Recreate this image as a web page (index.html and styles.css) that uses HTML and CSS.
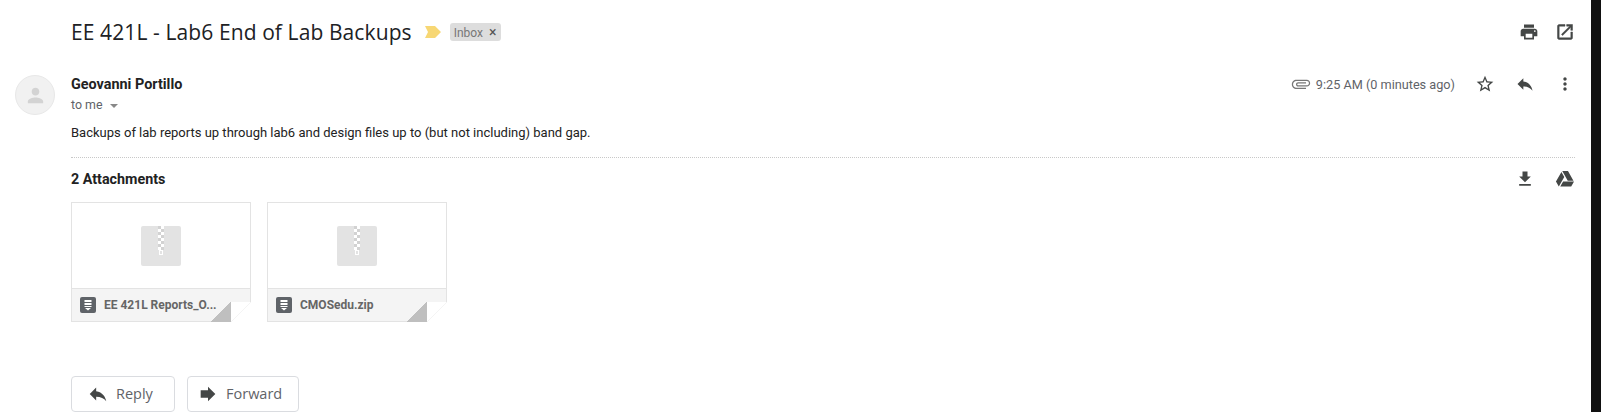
FILE: index.html
```html
<!DOCTYPE html>
<html>
<head>
  <title>EE 421L - Lab6 End of Lab Backups</title>
  <link rel="stylesheet" href="styles.css">
</head>
<body>
  <div class="page">
    <div class="mail">
      <div class="subject-row">
        <h2 class="subject">EE 421L - Lab6 End of Lab Backups</h2>
        <svg class="marker" viewBox="0 0 16 12"><path d="M0 0h10l6 6-6 6H0l3-6z"/></svg>
        <span class="label">Inbox <span class="label-x">×</span></span>
        <div class="icons icons-top">
          <svg class="icon" viewBox="0 0 24 24"><path d="M19 8H5c-1.66 0-3 1.34-3 3v6h4v4h12v-4h4v-6c0-1.66-1.34-3-3-3zm-3 11H8v-5h8v5zm3-7c-.55 0-1-.45-1-1s.45-1 1-1 1 .45 1 1-.45 1-1 1zm-1-9H6v4h12V3z"/></svg>
          <svg class="icon icon-bold" viewBox="0 0 24 24"><path d="M19 19H5V5h7V3H5c-1.11 0-2 .9-2 2v14c0 1.1.89 2 2 2h14c1.1 0 2-.9 2-2v-7h-2v7zM14 3v2h3.59l-9.83 9.83 1.41 1.41L19 6.41V10h2V3h-7z"/></svg>
        </div>
      </div>

      <div class="message">
        <div class="avatar">
          <svg viewBox="0 0 24 24"><path d="M12 12c2.21 0 4-1.79 4-4s-1.79-4-4-4-4 1.79-4 4 1.79 4 4 4zm0 2c-2.67 0-8 1.34-8 4v2h16v-2c0-2.66-5.33-4-8-4z"/></svg>
        </div>
        <div class="message-main">
          <div class="sender-row">
            <div class="sender">Geovanni Portillo</div>
            <div class="meta">
              <svg class="clip" viewBox="0 0 24 24"><path transform="rotate(90 12 12)" d="M16.5 6v11.5c0 2.21-1.79 4-4 4s-4-1.79-4-4V5c0-1.38 1.12-2.5 2.5-2.5s2.5 1.12 2.5 2.5v10.5c0 .55-.45 1-1 1s-1-.45-1-1V6H10v9.5c0 1.38 1.12 2.5 2.5 2.5s2.5-1.12 2.5-2.5V5c0-2.21-1.79-4-4-4S7 2.79 7 5v12.5c0 3.04 2.46 5.5 5.5 5.5s5.5-2.46 5.5-5.5V6h-1.5z"/></svg>
              <span class="time">9:25 AM (0 minutes ago)</span>
              <div class="icons">
                <svg class="icon" viewBox="0 0 24 24"><path d="M22 9.24l-7.19-.62L12 2 9.19 8.63 2 9.24l5.46 4.73L5.82 21 12 17.27 18.18 21l-1.63-7.03L22 9.24zM12 15.4l-3.76 2.27 1-4.28-3.32-2.88 4.38-.38L12 6.1l1.71 4.04 4.38.38-3.32 2.88 1 4.28L12 15.4z"/></svg>
                <svg class="icon" viewBox="0 0 24 24"><path d="M10 9V5l-7 7 7 7v-4.1c5 0 8.5 1.6 11 5.1-1-5-4-10-11-11z"/></svg>
                <svg class="icon" viewBox="0 0 24 24"><path d="M12 8c1.1 0 2-.9 2-2s-.9-2-2-2-2 .9-2 2 .9 2 2 2zm0 2c-1.1 0-2 .9-2 2s.9 2 2 2 2-.9 2-2-.9-2-2-2zm0 6c-1.1 0-2 .9-2 2s.9 2 2 2 2-.9 2-2-.9-2-2-2z"/></svg>
              </div>
            </div>
          </div>
          <div class="to">to me <span class="caret"></span></div>
          <p class="body-text">Backups of lab reports up through lab6 and design files up to (but not including) band gap.</p>

          <div class="attach-head">
            <span class="attach-title">2 Attachments</span>
            <div class="icons">
              <svg class="icon" viewBox="0 0 24 24"><path d="M19 9h-4V3H9v6H5l7 7 7-7zM5 18v2h14v-2H5z"/></svg>
              <svg class="icon" viewBox="0 0 24 24"><path d="M7.71 3.5L1.15 15l3.43 6 6.55-11.5L7.71 3.5zM9.73 15L6.3 21h13.12l3.43-6H9.73zm12.41-1L15.57 2.5H8.73L15.3 14h6.84z"/></svg>
            </div>
          </div>

          <div class="cards">
            <div class="card">
              <div class="thumb">
                <div class="zip"><span class="zipper"></span></div>
              </div>
              <div class="card-foot">
                <svg class="doc" viewBox="0 0 16 16"><rect width="16" height="16" rx="2" fill="#5f6368"/><path d="M4.5 3h7v2h-7zM4.5 6h7v2h-7zM4.5 9h7v1h-7zM5 11h6l-3 2.5z" fill="#fff"/></svg>
                <span class="file-name">EE 421L Reports_O...</span>
              </div>
              <div class="fold"></div>
            </div>
            <div class="card">
              <div class="thumb">
                <div class="zip"><span class="zipper"></span></div>
              </div>
              <div class="card-foot">
                <svg class="doc" viewBox="0 0 16 16"><rect width="16" height="16" rx="2" fill="#5f6368"/><path d="M4.5 3h7v2h-7zM4.5 6h7v2h-7zM4.5 9h7v1h-7zM5 11h6l-3 2.5z" fill="#fff"/></svg>
                <span class="file-name">CMOSedu.zip</span>
              </div>
              <div class="fold"></div>
            </div>
          </div>

          <div class="actions">
            <div class="btn btn-reply">
              <svg viewBox="0 0 24 24"><path d="M10 9V5l-7 7 7 7v-4.1c5 0 8.5 1.6 11 5.1-1-5-4-10-11-11z"/></svg>
              <span class="btn-text">Reply</span>
            </div>
            <div class="btn btn-forward">
              <svg viewBox="0 0 24 24"><path d="M12 8V4l8 8-8 8v-4H4V8z"/></svg>
              <span class="btn-text">Forward</span>
            </div>
          </div>
        </div>
      </div>
    </div>
    <div class="edge"></div>
  </div>
</body>
</html>
```

FILE: styles.css
```css
html, body {
  margin: 0;
  height: 412px;
  overflow: hidden;
  background: white;
}

body {
  font-family: Roboto, sans-serif;
  color: #222;
}

.page {
  display: flex;
  height: 412px;
}

.mail {
  flex: 1;
  min-width: 0;
  padding-right: 16px;
}

.edge {
  width: 10px;
  background-color: #111;
}

.subject-row {
  display: flex;
  align-items: center;
  height: 64px;
  padding-left: 71px;
}

.subject {
  margin: 0;
  font-family: "Open Sans", sans-serif;
  font-size: 21px;
  letter-spacing: 0.1px;
  font-weight: 400;
  color: #202124;
}

.marker {
  width: 16px;
  height: 12px;
  margin-left: 13px;
  fill: #f7d774;
}

.label {
  margin-left: 9px;
  padding: 0 5px 0 4px;
  height: 18px;
  line-height: 18px;
  border-radius: 3px;
  background-color: #dddddd;
  color: #777;
  font-size: 12px;
}

.label-x {
  color: #555;
  margin-left: 3px;
  font-size: 14px;
}

.icons {
  display: flex;
  gap: 20px;
}

.icons-top {
  margin-left: auto;
  gap: 16px;
}

.icon {
  width: 20px;
  height: 20px;
  fill: #444746;
}

.icon-bold {
  stroke: #444746;
  stroke-width: 0.6;
}

.message {
  display: flex;
  gap: 16px;
  margin-top: 11px;
  padding-left: 15px;
}

.avatar {
  flex: none;
  display: flex;
  align-items: center;
  justify-content: center;
  box-sizing: border-box;
  width: 40px;
  height: 40px;
  border-radius: 50%;
  background-color: #f1f1f1;
  border: 1px solid #e8e8e8;
}

.avatar svg {
  width: 23px;
  height: 23px;
  fill: #d3d3d3;
}

.message-main {
  flex: 1;
  min-width: 0;
}

.sender-row {
  display: flex;
  justify-content: space-between;
  align-items: center;
  height: 20px;
  margin-top: -1px;
}

.sender {
  font-size: 14.4px;
  font-weight: 700;
  color: #222;
}

.meta {
  display: flex;
  align-items: center;
}

.clip {
  width: 20px;
  height: 20px;
  fill: #777;
  margin-right: 5px;
}

.time {
  font-size: 12.7px;
  color: #5f6368;
  margin-right: 20px;
}

.to {
  margin-top: 1px;
  height: 20px;
  line-height: 20px;
  font-size: 12.4px;
  color: #5f6368;
}

.caret {
  display: inline-block;
  margin-left: 4px;
  vertical-align: middle;
  border-top: 4px solid #888;
  border-left: 4px solid transparent;
  border-right: 4px solid transparent;
}

.body-text {
  margin: 8px 0 0;
  padding-bottom: 14px;
  border-bottom: 1px dotted #c8c8c8;
  font-size: 13px;
  line-height: 20px;
  color: #222;
}

.attach-head {
  display: flex;
  justify-content: space-between;
  align-items: center;
  height: 20px;
  margin-top: 11px;
}

.attach-title {
  font-size: 14.3px;
  font-weight: 700;
  color: #222;
}

.cards {
  display: flex;
  gap: 16px;
  margin-top: 13px;
}

.card {
  position: relative;
  box-sizing: border-box;
  width: 180px;
  height: 120px;
  border: 1px solid #e3e3e3;
}

.thumb {
  display: flex;
  align-items: center;
  justify-content: center;
  box-sizing: border-box;
  height: 86px;
  padding-top: 1px;
  border-bottom: 1px solid #e3e3e3;
}

.zip {
  position: relative;
  width: 40px;
  height: 40px;
  border-radius: 2px;
  background-color: #e3e3e3;
}

.zipper {
  position: absolute;
  left: 17px;
  top: 0;
  width: 6px;
  height: 24px;
  background-image: conic-gradient(#fff 25%, #d2d2d2 0 50%, #fff 0 75%, #d2d2d2 0);
  background-size: 6px 6px;
}

.zipper::after {
  content: "";
  position: absolute;
  left: 1px;
  top: 24px;
  box-sizing: border-box;
  width: 4px;
  height: 5px;
  border: 1px solid #fff;
}

.card-foot {
  display: flex;
  align-items: center;
  gap: 8px;
  height: 32px;
  padding-left: 8px;
  background-color: #f4f4f4;
}

.doc {
  width: 16px;
  height: 16px;
  flex: none;
}

.file-name {
  font-size: 12px;
  font-weight: 700;
  color: #666;
}

.fold {
  position: absolute;
  right: -1px;
  bottom: -1px;
  width: 40px;
  height: 20px;
  background: linear-gradient(to bottom right, transparent 49.5%, #bfbfbf 50%) left / 20px 20px no-repeat,
              linear-gradient(to bottom right, white 49%, #f4f4f4 50%, white 51%) right / 20px 20px no-repeat;
}

.actions {
  display: flex;
  gap: 12px;
  margin-top: 54px;
}

.btn {
  display: flex;
  align-items: center;
  box-sizing: border-box;
  height: 36px;
  border: 1px solid #dadce0;
  border-radius: 4px;
  font-family: "Open Sans", sans-serif;
  font-size: 14.5px;
  color: #5f6368;
}

.btn svg {
  width: 22px;
  height: 22px;
  fill: #444746;
  margin-right: 7px;
}

.btn-text {
  padding-bottom: 2px;
}

.btn-reply {
  width: 104px;
  padding-left: 15px;
}

.btn-forward {
  width: 112px;
  padding-left: 9px;
}
```
